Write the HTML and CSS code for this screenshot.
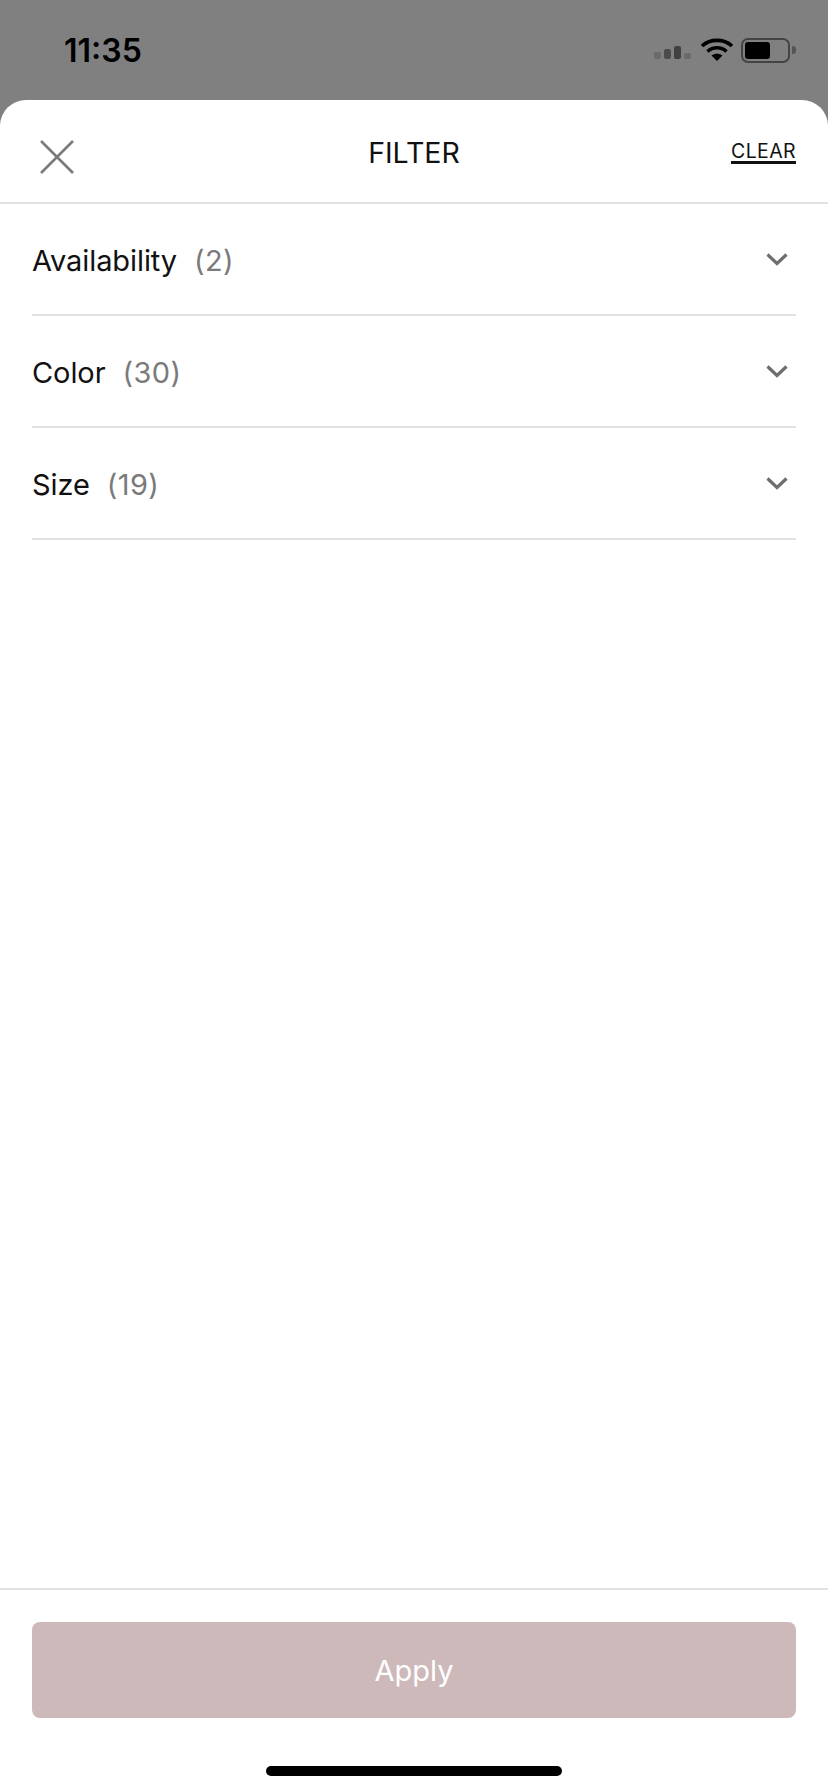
FILE: index.html
```html
<!DOCTYPE html>
<html lang="en">
<head>
    <meta charset="UTF-8">
    <meta name="viewport" content="width=device-width, initial-scale=1.0">
    <title>Filter</title>
    <link rel="stylesheet" href="styles.css">
</head>
<body>
    <div class="status-bar">
        <span class="time">11:35</span>
        <div class="status-icons">
            <div class="signal">
                <span class="bar bar-1"></span>
                <span class="bar bar-2"></span>
                <span class="bar bar-3"></span>
                <span class="bar bar-4"></span>
            </div>
            <svg class="wifi" width="32" height="24" viewBox="0 0 32 24">
                <path d="M1 8 C9 0.5 23 0.5 31 8" fill="none" stroke="#000" stroke-width="3.6"/>
                <path d="M6.5 13.5 C12 8.5 20 8.5 25.5 13.5" fill="none" stroke="#000" stroke-width="3.6"/>
                <path d="M10.5 17.5 C14 15 18 15 21.5 17.5 L16 23 Z" fill="#000"/>
            </svg>
            <div class="battery">
                <div class="battery-body"><div class="battery-level"></div></div>
                <span class="battery-cap"></span>
            </div>
        </div>
    </div>
    <div class="sheet">
        <header class="sheet-header">
            <button class="close" aria-label="Close">
                <svg width="34" height="34" viewBox="0 0 34 34">
                    <path d="M1 1 L33 33 M33 1 L1 33" stroke="#7a7a7a" stroke-width="2.6" fill="none"/>
                </svg>
            </button>
            <h1 class="sheet-title">FILTER</h1>
            <a class="clear">CLEAR</a>
        </header>
        <ul class="filters">
            <li class="filter-row">
                <span class="filter-name">Availability</span>
                <span class="filter-count">(2)</span>
                <svg class="chevron" width="22" height="13" viewBox="0 0 22 13"><path d="M1.5 1.5 L11 10.5 L20.5 1.5" fill="none" stroke="#6e6e6e" stroke-width="3.2"/></svg>
            </li>
            <li class="filter-row">
                <span class="filter-name">Color</span>
                <span class="filter-count">(30)</span>
                <svg class="chevron" width="22" height="13" viewBox="0 0 22 13"><path d="M1.5 1.5 L11 10.5 L20.5 1.5" fill="none" stroke="#6e6e6e" stroke-width="3.2"/></svg>
            </li>
            <li class="filter-row">
                <span class="filter-name">Size</span>
                <span class="filter-count">(19)</span>
                <svg class="chevron" width="22" height="13" viewBox="0 0 22 13"><path d="M1.5 1.5 L11 10.5 L20.5 1.5" fill="none" stroke="#6e6e6e" stroke-width="3.2"/></svg>
            </li>
        </ul>
        <footer class="sheet-footer">
            <button class="apply">Apply</button>
            <div class="home-bar"></div>
        </footer>
    </div>
</body>
</html>
```

FILE: styles.css
```css
* {
    box-sizing: border-box;
}
body {
    margin: 0;
    height: 1792px;
    display: flex;
    flex-direction: column;
    font-family: Inter, "Noto Sans", sans-serif;
    background: #808080;
    color: #111;
    overflow: hidden;
}
.status-bar {
    height: 100px;
    flex-shrink: 0;
    display: flex;
    justify-content: space-between;
    align-items: center;
    padding: 0 32px 0 64px;
}
.time {
    font-size: 32px;
    font-weight: 600;
    color: #000;
}
.status-icons {
    display: flex;
    align-items: center;
    gap: 8px;
}
.signal {
    display: flex;
    align-items: flex-end;
    gap: 3px;
    height: 14px;
    margin-top: 4px;
    margin-right: 2px;
}
.bar {
    width: 7px;
    border-radius: 2px;
}
.bar-1 {
    height: 7px;
    background: #6a6a6a;
}
.bar-2 {
    height: 10px;
    background: #4c4c4c;
}
.bar-3 {
    height: 13px;
    background: #404040;
}
.bar-4 {
    height: 6px;
    background: #6a6a6a;
}
.battery {
    display: flex;
    align-items: center;
    gap: 2px;
}
.battery-body {
    width: 49px;
    height: 25px;
    border: 2px solid #444;
    border-radius: 7px;
    padding: 2px;
}
.battery-level {
    width: 25px;
    height: 100%;
    background: #000;
    border-radius: 3px;
}
.battery-cap {
    width: 4px;
    height: 8px;
    background: #555;
    border-radius: 0 3px 3px 0;
}
.sheet {
    flex: 1;
    display: flex;
    flex-direction: column;
    background: #fff;
    border-radius: 26px 26px 0 0;
}
.sheet-header {
    height: 104px;
    flex-shrink: 0;
    display: flex;
    align-items: center;
    justify-content: space-between;
    padding: 0 32px 0 40px;
    border-bottom: 2px solid #e2e2e2;
    position: relative;
}
.close {
    padding: 0;
    border: none;
    background: none;
    height: 34px;
    margin-top: 12px;
}
.sheet-title {
    position: absolute;
    left: 0;
    right: 0;
    margin: 2px 0 0;
    text-align: center;
    font-size: 28.5px;
    font-weight: 400;
}
.clear {
    font-size: 19.5px;
    letter-spacing: 0.4px;
    line-height: 19px;
    margin-top: 4px;
    color: #111;
    border-bottom: 3px solid #111;
}
.filters {
    list-style: none;
    margin: 0;
    padding: 0 32px;
}
.filter-row {
    height: 112px;
    display: flex;
    align-items: center;
    border-bottom: 2px solid #e2e2e2;
}
.filter-name {
    font-size: 29px;
    letter-spacing: -0.08px;
    margin-top: 2px;
    margin-right: 17px;
}
.filter-count {
    font-size: 29px;
    letter-spacing: 0.4px;
    margin-top: 2px;
    color: #7a7a7a;
}
.chevron {
    margin-left: auto;
    margin-right: 8px;
    margin-top: 0;
}
.sheet-footer {
    margin-top: auto;
    height: 204px;
    border-top: 2px solid #e2e2e2;
    padding: 32px 32px 0;
    display: flex;
    flex-direction: column;
    align-items: center;
}
.apply {
    width: 100%;
    height: 96px;
    border: none;
    border-radius: 8px;
    background: #cdb9ba;
    color: #fff;
    font-family: inherit;
    font-size: 29px;
}
.home-bar {
    width: 296px;
    height: 10px;
    margin-top: 48px;
    border-radius: 5px;
    background: #000;
}
```
